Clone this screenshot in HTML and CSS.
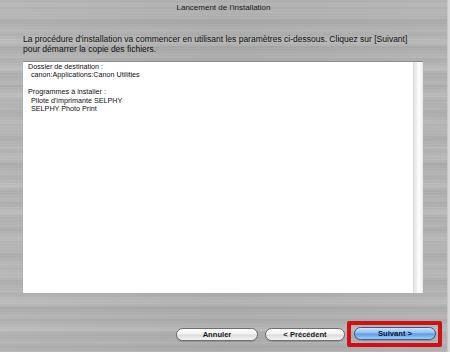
FILE: index.html
```html
<!DOCTYPE html>
<html lang="fr">
  <head>
    <meta charset="UTF-8" />
    <meta name="viewport" content="width=device-width, initial-scale=1.0" />
    <title>Lancement de l'installation</title>
    <link rel="stylesheet" href="styles.css">
  </head>
  <body>
    <div class="window">
      <header class="titlebar">Lancement de l'installation</header>
      <main class="content">
        <p class="intro">
          La procédure d'installation va commencer en utilisant les paramètres ci-dessous. Cliquez sur [Suivant]<br>
          pour démarrer la copie des fichiers.
        </p>
        <div class="listbox">
          <div class="list-text">
            <div>Dossier de destination :</div>
            <div class="indent">canon:Applications:Canon Utilities</div>
            <div>&nbsp;</div>
            <div>Programmes à installer :</div>
            <div class="indent">Pilote d'imprimante SELPHY</div>
            <div class="indent">SELPHY Photo Print</div>
          </div>
          <div class="scroll-track"></div>
        </div>
      </main>
      <footer class="buttons">
        <button class="btn">Annuler</button>
        <button class="btn">&lt; Précédent</button>
        <div class="highlight">
          <button class="btn btn-default">Suivant &gt;</button>
        </div>
      </footer>
    </div>
  </body>
</html>
```

FILE: styles.css
```css
body {
  margin: 0;
  padding: 0;
  font-family: "Liberation Sans", Arial, sans-serif;
  color: #111;
  background-color: #d8d8d8;
}

.window {
  width: 447px;
  height: 352px;
  display: flex;
  flex-direction: column;
  background-color: #b4b4b4;
  background-image:
    repeating-linear-gradient(to bottom, rgba(255, 255, 255, 0.05) 0px, rgba(255, 255, 255, 0) 1px, rgba(0, 0, 0, 0.025) 2px, rgba(255, 255, 255, 0) 3px),
    repeating-linear-gradient(to bottom, rgba(255, 255, 255, 0) 0px, rgba(255, 255, 255, 0.06) 5px, rgba(0, 0, 0, 0.03) 8px, rgba(255, 255, 255, 0) 13px),
    repeating-linear-gradient(to bottom, rgba(0, 0, 0, 0.02) 0px, rgba(255, 255, 255, 0.05) 11px, rgba(0, 0, 0, 0.03) 19px, rgba(0, 0, 0, 0.02) 29px),
    linear-gradient(to right, #b8b8b8, #b0b0b0 50%, #b6b6b6);
  border-right: 1px solid #c8c8c8;
}

.titlebar {
  height: 14px;
  line-height: 15px;
  text-align: center;
  font-size: 8px;
  color: #1a1a1a;
}

.content {
  padding: 0 0 0 23px;
}

.intro {
  margin: 20px 0 0 0;
  font-size: 8.5px;
  line-height: 10px;
  color: #141414;
}

.listbox {
  display: flex;
  width: 400px;
  height: 232px;
  margin-top: 7px;
  background: #ffffff;
  border-top: 1px solid #8c8c8c;
  box-sizing: border-box;
}

.list-text {
  flex: 1;
  padding: 1px 0 0 5px;
  font-size: 7.2px;
  line-height: 8.4px;
  color: #111;
}

.list-text .indent {
  padding-left: 3px;
}

.scroll-track {
  width: 9px;
  background: linear-gradient(to right, #e4e4e4, #f6f6f6 40%, #ffffff 60%, #e8e8e8);
  border-left: 1px solid #dcdcdc;
}

.buttons {
  display: flex;
  align-items: center;
  justify-content: flex-end;
  margin-top: 28px;
  padding-right: 5px;
}

.btn {
  width: 82px;
  height: 13px;
  padding: 0;
  border: 1px solid #6e6e6e;
  border-radius: 7px;
  background: linear-gradient(to bottom, #ffffff 0%, #f2f2f2 45%, #dcdcdc 55%, #f4f4f4 100%);
  font-family: "Liberation Sans", Arial, sans-serif;
  font-size: 7.6px;
  font-weight: bold;
  color: #1a1a1a;
  line-height: 11px;
  margin-left: 7px;
  box-shadow: 0 1px 1px rgba(0, 0, 0, 0.15);
}

.btn:nth-child(2) {
  width: 80px;
}

.btn-default {
  margin-left: 0;
  border-color: #3c5a85;
  background: linear-gradient(to bottom, #cfe3fb 0%, #8fbcf0 45%, #5d9ce6 55%, #9fd0fb 100%);
  color: #0b1a33;
}

.highlight {
  display: flex;
  margin-left: 2px;
  padding: 2px 2px 3px 3px;
  border: 4px solid #d40f14;
  border-radius: 2px;
}
```
